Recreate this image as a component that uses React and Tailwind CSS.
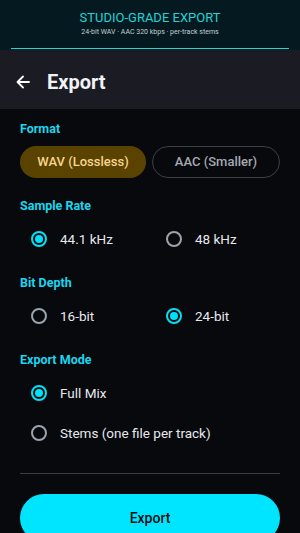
import React, { useState } from 'react'

const Radio = ({ checked, label, onClick }) => (
  <button onClick={onClick} className="flex items-center h-10 text-left">
    <span
      className={`w-4 h-4 rounded-full border-2 flex items-center justify-center ${
        checked ? 'border-[#00e1f5]' : 'border-[#9aa3ae]'
      }`}
    >
      {checked && <span className="w-2 h-2 rounded-full bg-[#00e1f5]" />}
    </span>
    <span className="ml-[13px] text-[13.5px] text-[#e6e8ec]">{label}</span>
  </button>
)

const Label = ({ children }) => (
  <div className="text-[12.5px] leading-4 font-bold text-[#1ad6ee]">{children}</div>
)

const App = () => {
  const [format, setFormat] = useState('wav')
  const [rate, setRate] = useState('44.1')
  const [depth, setDepth] = useState('24')
  const [mode, setMode] = useState('mix')

  return (
    <div className="w-[300px] h-[533px] overflow-hidden bg-[#08090d]" style={{ fontFamily: 'Roboto, "Noto Sans", sans-serif' }}>
      {/* banner */}
      <div className="h-[50px] bg-[#041a20] flex flex-col items-center">
        <div className="mt-[10px] text-[13px] leading-[15px] text-[#22d2d6]">STUDIO-GRADE EXPORT</div>
        <div className="mt-[3px] text-[7px] leading-[9px] text-[#c7cdd2]">24-bit WAV · AAC 320 kbps · per-track stems</div>
        <div className="mt-auto mb-[1px] w-[278px] h-px bg-[#2ad3d3]" />
      </div>

      {/* header */}
      <div className="h-[59px] bg-[#1a1b23] flex items-center pt-[4px]">
        <svg className="ml-[16px]" width="14" height="14" viewBox="0 0 14 14" fill="none" stroke="#ffffff" strokeWidth="1.8" strokeLinecap="round" strokeLinejoin="round">
          <path d="M13 7H1.5M7 1.5L1.5 7 7 12.5" />
        </svg>
        <h1 className="ml-[17px] text-[20px] font-bold text-[#f1f2f6]">Export</h1>
      </div>

      {/* content */}
      <div className="px-5 pt-[12px]">
        <Label>Format</Label>
        <div className="mt-[9px] flex gap-[6px]">
          <button
            onClick={() => setFormat('wav')}
            className={`flex-1 h-8 rounded-full text-[13px] font-medium ${
              format === 'wav' ? 'bg-[#5a4300] text-[#f6d48e]' : 'border border-[#3c3f47] text-[#a4aab2]'
            }`}
          >
            WAV (Lossless)
          </button>
          <button
            onClick={() => setFormat('aac')}
            className={`flex-1 h-8 rounded-full text-[13px] font-medium ${
              format === 'aac' ? 'bg-[#5a4300] text-[#f6d48e]' : 'border border-[#3c3f47] text-[#a4aab2]'
            }`}
          >
            AAC (Smaller)
          </button>
        </div>

        <div className="mt-5">
          <Label>Sample Rate</Label>
        </div>
        <div className="mt-[5px] grid grid-cols-2 gap-x-[32px] px-[11px]">
          <Radio checked={rate === '44.1'} label="44.1 kHz" onClick={() => setRate('44.1')} />
          <Radio checked={rate === '48'} label="48 kHz" onClick={() => setRate('48')} />
        </div>

        <div className="mt-4">
          <Label>Bit Depth</Label>
        </div>
        <div className="mt-[5px] grid grid-cols-2 gap-x-[32px] px-[11px]">
          <Radio checked={depth === '16'} label="16-bit" onClick={() => setDepth('16')} />
          <Radio checked={depth === '24'} label="24-bit" onClick={() => setDepth('24')} />
        </div>

        <div className="mt-4">
          <Label>Export Mode</Label>
        </div>
        <div className="mt-[5px] flex flex-col px-[11px]">
          <Radio checked={mode === 'mix'} label="Full Mix" onClick={() => setMode('mix')} />
          <Radio checked={mode === 'stems'} label="Stems (one file per track)" onClick={() => setMode('stems')} />
        </div>

        <div className="mt-5 h-px bg-[#3a3b40]" />

        <button className="mt-5 w-full h-12 rounded-full bg-[#00e5ff] text-[14px] font-medium text-[#0b0d10]">
          Export
        </button>
      </div>
    </div>
  )
}

export default App
